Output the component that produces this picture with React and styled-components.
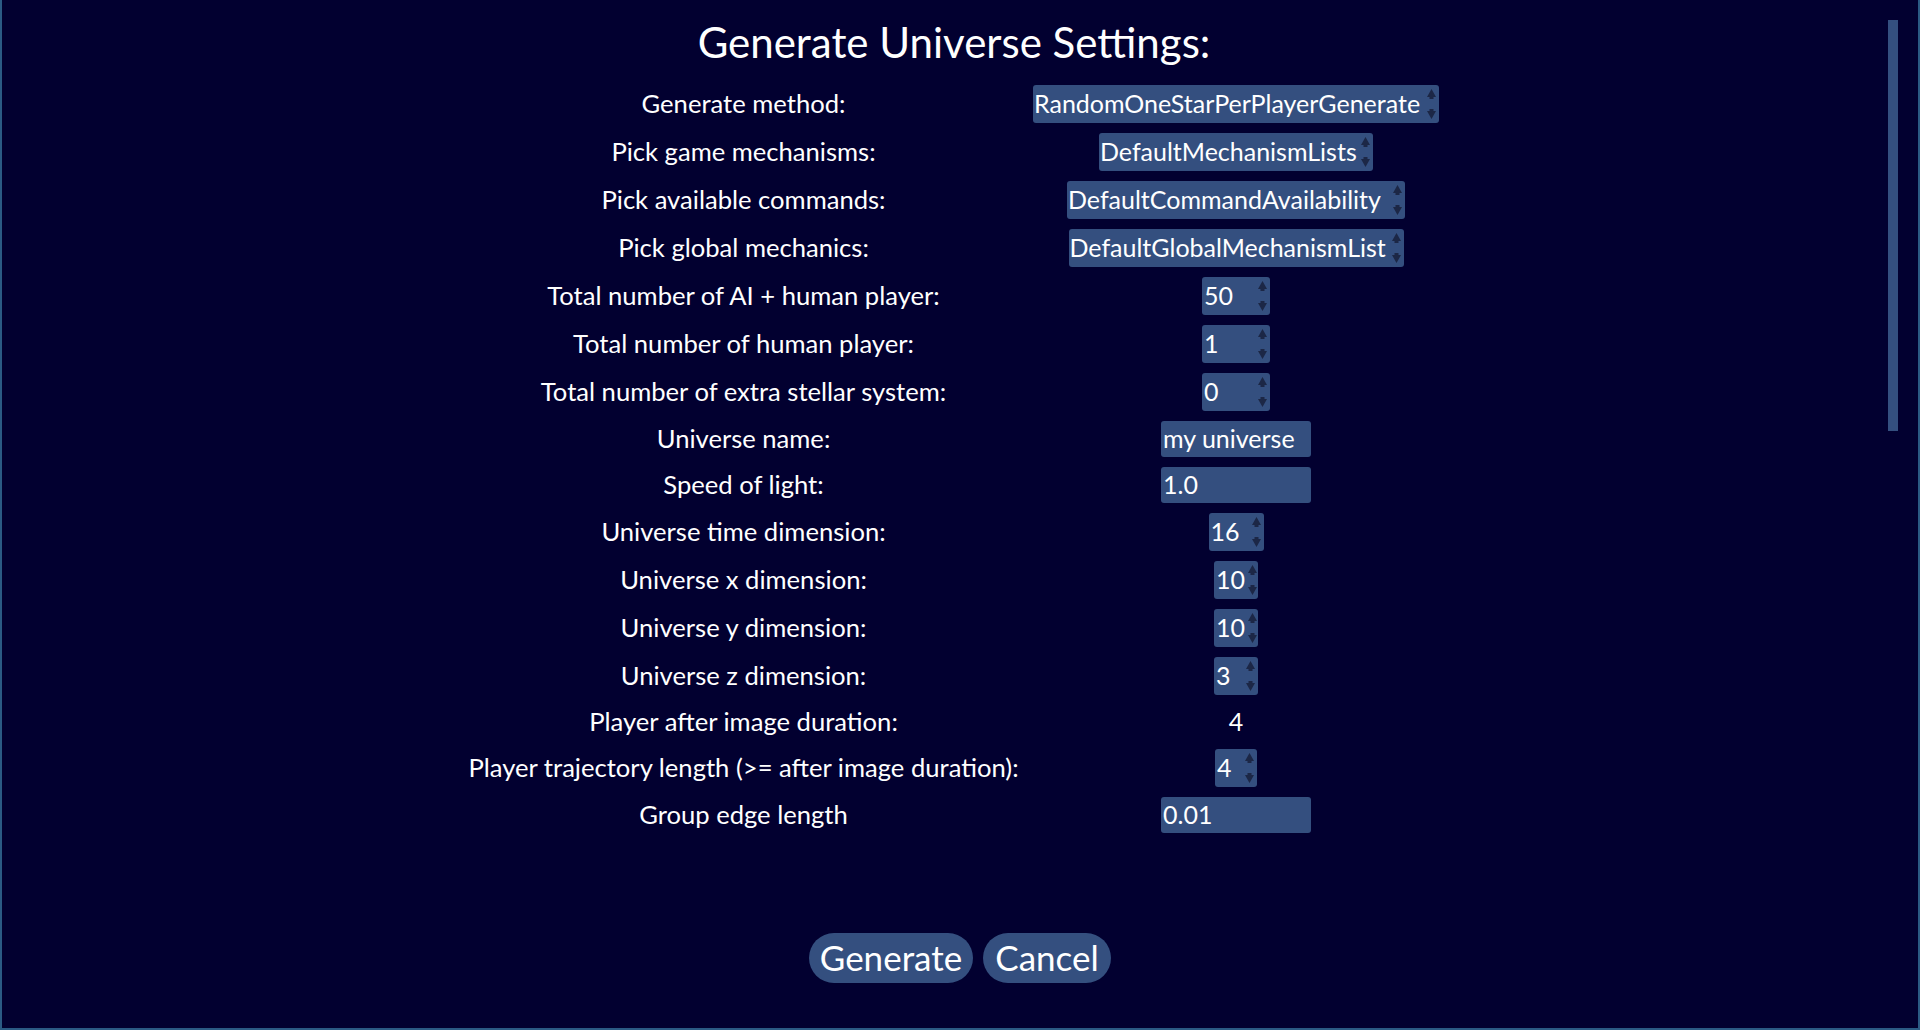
import React from 'react';
import styled, { createGlobalStyle } from 'styled-components';

const GlobalStyle = createGlobalStyle`
  html, body {
    margin: 0;
    padding: 0;
    background: #020030;
    overflow: hidden;
  }
  * {
    box-sizing: border-box;
  }
`;

const Frame = styled.div`
  position: relative;
  width: 1920px;
  height: 1030px;
  background: #020030;
  border: 2px solid #2b5a84;
  border-top: none;
  display: flex;
  flex-direction: column;
  font-family: Lato, 'Noto Sans', sans-serif;
  color: #ffffff;
`;

const ScrollArea = styled.div`
  display: flex;
  flex-direction: column;
  align-items: center;
  padding-right: 12px;
`;

const ScrollBar = styled.div`
  position: absolute;
  left: 1886px;
  top: 20px;
  width: 10px;
  height: 411px;
  background: #344f7f;
`;

const Title = styled.h1`
  margin: 0;
  padding-top: 17px;
  height: 85px;
  font-size: 42px;
  font-weight: 400;
  line-height: 50px;
`;

const SettingsGrid = styled.div`
  display: grid;
  grid-template-columns: 550px 407px;
  column-gap: 14px;
  row-gap: 10px;
  align-items: center;
`;

const Label = styled.div`
  justify-self: center;
  height: 34px;
  font-size: 25.6px;
  line-height: 33px;
  white-space: nowrap;
`;

const Value = styled.div`
  justify-self: center;
  height: 34px;
  font-size: 25px;
  line-height: 33px;
`;

const Field = styled.div`
  justify-self: center;
  display: flex;
  align-items: center;
  height: ${(p) => p.$h || 38}px;
  width: ${(p) => (p.$w ? `${p.$w}px` : 'auto')};
  background: #344f7f;
  border-radius: 3px;
  padding: 0 ${(p) => (p.$arrows ? 3 : 2)}px 2px ${(p) => (p.$pl ?? 2)}px;
  font-size: 25px;
  line-height: 1;
  white-space: nowrap;
`;

const FieldText = styled.span`
  flex: 1;
`;

const Arrows = styled.svg`
  flex: none;
  align-self: flex-start;
  margin-left: 3px;
`;

const Footer = styled.div`
  display: flex;
  justify-content: center;
  gap: 10px;
  margin-top: 100px;
`;

const Button = styled.button`
  height: 50px;
  width: ${(p) => p.$w}px;
  border: none;
  border-radius: 25px;
  background: #344f7f;
  color: #ffffff;
  font-family: Lato, 'Noto Sans', sans-serif;
  font-size: 35px;
  line-height: 1;
  padding: 0 0 2px;
  cursor: pointer;
`;

const UpDown = () => (
  <Arrows width="9" height="38" viewBox="0 0 9 38">
    <polygon points="4.5,4 9,12 0,12" fill="#1c2746" />
    <rect x="2.5" y="12" width="4" height="2" fill="#1c2746" />
    <rect x="2.5" y="24" width="4" height="2" fill="#1c2746" />
    <polygon points="0,26 9,26 4.5,34" fill="#1c2746" />
  </Arrows>
);

const rows = [
  { label: 'Generate method:', kind: 'option', value: 'RandomOneStarPerPlayerGenerate', w: 406, pl: 1 },
  { label: 'Pick game mechanisms:', kind: 'option', value: 'DefaultMechanismLists', w: 274, pl: 1 },
  { label: 'Pick available commands:', kind: 'option', value: 'DefaultCommandAvailability', w: 338, pl: 1 },
  { label: 'Pick global mechanics:', kind: 'option', value: 'DefaultGlobalMechanismList', w: 335, pl: 1 },
  { label: 'Total number of AI + human player:', kind: 'spin', value: '50', w: 68 },
  { label: 'Total number of human player:', kind: 'spin', value: '1', w: 68 },
  { label: 'Total number of extra stellar system:', kind: 'spin', value: '0', w: 68 },
  { label: 'Universe name:', kind: 'line', value: 'my universe', w: 150 },
  { label: 'Speed of light:', kind: 'line', value: '1.0', w: 150 },
  { label: 'Universe time dimension:', kind: 'spin', value: '16', w: 55 },
  { label: 'Universe x dimension:', kind: 'spin', value: '10', w: 44 },
  { label: 'Universe y dimension:', kind: 'spin', value: '10', w: 44 },
  { label: 'Universe z dimension:', kind: 'spin', value: '3', w: 44 },
  { label: 'Player after image duration:', kind: 'text', value: '4' },
  { label: 'Player trajectory length (>= after image duration):', kind: 'spin', value: '4', w: 42 },
  { label: 'Group edge length', kind: 'line', value: '0.01', w: 150 },
];

const Control = ({ row }) => {
  if (row.kind === 'text') return <Value>{row.value}</Value>;
  if (row.kind === 'line') {
    return (
      <Field $w={row.w} $h={36}>
        <FieldText>{row.value}</FieldText>
      </Field>
    );
  }
  return (
    <Field $w={row.w} $arrows $pl={row.pl}>
      <FieldText>{row.value}</FieldText>
      <UpDown />
    </Field>
  );
};

export default function App() {
  return (
    <>
      <GlobalStyle />
      <Frame>
        <ScrollArea>
          <Title>Generate Universe Settings:</Title>
          <SettingsGrid>
            {rows.map((row) => (
              <React.Fragment key={row.label}>
                <Label>{row.label}</Label>
                <Control row={row} />
              </React.Fragment>
            ))}
          </SettingsGrid>
        </ScrollArea>
        <Footer>
          <Button $w={164}>Generate</Button>
          <Button $w={128}>Cancel</Button>
        </Footer>
        <ScrollBar />
      </Frame>
    </>
  );
}
